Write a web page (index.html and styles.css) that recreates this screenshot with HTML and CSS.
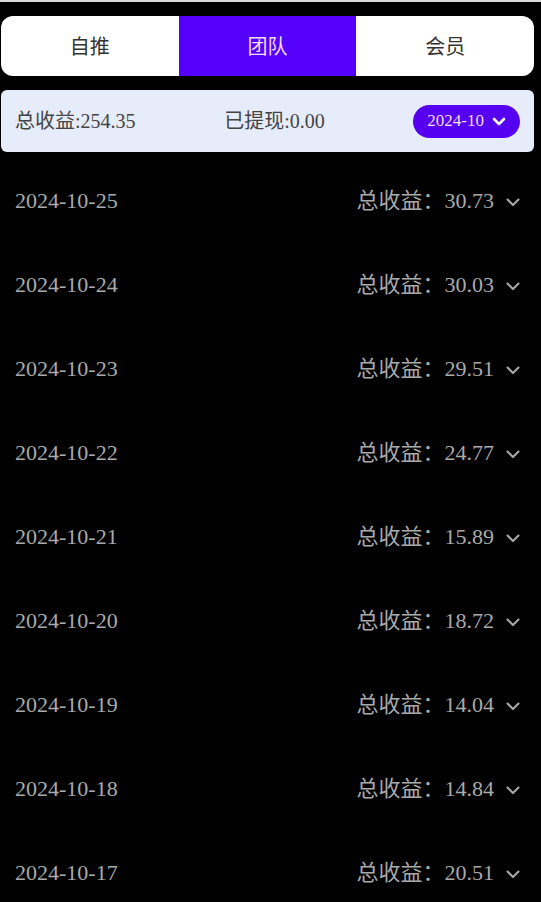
FILE: index.html
```html
<!DOCTYPE html>
<html lang="zh-CN">
<head>
<meta charset="utf-8">
<title>团队收益</title>
<link rel="stylesheet" href="styles.css">
</head>
<body>
<div class="topline"></div>
<div class="page">
  <div class="tabs">
    <div class="tab">自推</div>
    <div class="tab active">团队</div>
    <div class="tab">会员</div>
  </div>
  <div class="summary">
    <span class="sum-item">总收益:254.35</span>
    <span class="sum-item">已提现:0.00</span>
    <span class="pill">2024-10 <svg class="pill-chev" viewBox="0 0 14 9" width="14" height="9"><path d="M2 2 L7 7 L12 2" fill="none" stroke="#fff" stroke-width="2.6" stroke-linecap="round" stroke-linejoin="round"/></svg></span>
  </div>
  <div class="list">
    <div class="row"><span class="date">2024-10-25</span><span class="amount">总收益：30.73<svg class="chev" viewBox="0 0 14 9" width="14" height="9"><path d="M1.5 1.5 L7 7 L12.5 1.5" fill="none" stroke="#aaa" stroke-width="2" stroke-linecap="round" stroke-linejoin="round"/></svg></span></div>
    <div class="row"><span class="date">2024-10-24</span><span class="amount">总收益：30.03<svg class="chev" viewBox="0 0 14 9" width="14" height="9"><path d="M1.5 1.5 L7 7 L12.5 1.5" fill="none" stroke="#aaa" stroke-width="2" stroke-linecap="round" stroke-linejoin="round"/></svg></span></div>
    <div class="row"><span class="date">2024-10-23</span><span class="amount">总收益：29.51<svg class="chev" viewBox="0 0 14 9" width="14" height="9"><path d="M1.5 1.5 L7 7 L12.5 1.5" fill="none" stroke="#aaa" stroke-width="2" stroke-linecap="round" stroke-linejoin="round"/></svg></span></div>
    <div class="row"><span class="date">2024-10-22</span><span class="amount">总收益：24.77<svg class="chev" viewBox="0 0 14 9" width="14" height="9"><path d="M1.5 1.5 L7 7 L12.5 1.5" fill="none" stroke="#aaa" stroke-width="2" stroke-linecap="round" stroke-linejoin="round"/></svg></span></div>
    <div class="row"><span class="date">2024-10-21</span><span class="amount">总收益：15.89<svg class="chev" viewBox="0 0 14 9" width="14" height="9"><path d="M1.5 1.5 L7 7 L12.5 1.5" fill="none" stroke="#aaa" stroke-width="2" stroke-linecap="round" stroke-linejoin="round"/></svg></span></div>
    <div class="row"><span class="date">2024-10-20</span><span class="amount">总收益：18.72<svg class="chev" viewBox="0 0 14 9" width="14" height="9"><path d="M1.5 1.5 L7 7 L12.5 1.5" fill="none" stroke="#aaa" stroke-width="2" stroke-linecap="round" stroke-linejoin="round"/></svg></span></div>
    <div class="row"><span class="date">2024-10-19</span><span class="amount">总收益：14.04<svg class="chev" viewBox="0 0 14 9" width="14" height="9"><path d="M1.5 1.5 L7 7 L12.5 1.5" fill="none" stroke="#aaa" stroke-width="2" stroke-linecap="round" stroke-linejoin="round"/></svg></span></div>
    <div class="row"><span class="date">2024-10-18</span><span class="amount">总收益：14.84<svg class="chev" viewBox="0 0 14 9" width="14" height="9"><path d="M1.5 1.5 L7 7 L12.5 1.5" fill="none" stroke="#aaa" stroke-width="2" stroke-linecap="round" stroke-linejoin="round"/></svg></span></div>
    <div class="row"><span class="date">2024-10-17</span><span class="amount">总收益：20.51<svg class="chev" viewBox="0 0 14 9" width="14" height="9"><path d="M1.5 1.5 L7 7 L12.5 1.5" fill="none" stroke="#aaa" stroke-width="2" stroke-linecap="round" stroke-linejoin="round"/></svg></span></div>
  </div>
</div>
</body>
</html>
```
FILE: styles.css
```css
html, body {
  margin: 0;
  padding: 0;
  background: #000;
}
body {
  font-family: "Liberation Serif", "Noto Sans CJK SC", serif;
  overflow: hidden;
  height: 902px;
}
.topline {
  height: 2px;
  background: #d9d9d9;
}
.page {
  padding: 14px 7px 0 1px;
}
.tabs {
  display: flex;
  height: 60px;
  background: #fff;
  border-radius: 12px;
  overflow: hidden;
}
.tab {
  flex: 1;
  display: flex;
  align-items: center;
  justify-content: center;
  padding-top: 2px;
  font-size: 20px;
  line-height: 24px;
  color: #333;
}
.tab.active {
  background: #5500fb;
  color: #f6dcff;
}
.summary {
  margin-top: 14px;
  height: 62px;
  background: #e6ecf9;
  border-radius: 6px;
  display: flex;
  align-items: center;
  justify-content: space-between;
  padding: 0 14px;
}
.sum-item {
  font-size: 20px;
  line-height: 22px;
  color: #444;
}
.pill {
  display: flex;
  align-items: center;
  gap: 8px;
  height: 33px;
  padding: 0 14px;
  background: #5500f0;
  border-radius: 17px;
  font-size: 17px;
  line-height: 20px;
  color: #f6dcff;
}
.pill-chev {
  display: block;
}
.list {
  margin-top: 7px;
}
.row {
  height: 84px;
  display: flex;
  align-items: center;
  justify-content: space-between;
  padding: 0 14px;
  font-size: 22px;
  line-height: 24px;
  color: #aaa;
}
.date {
  line-height: 24px;
}
.amount {
  line-height: 24px;
  white-space: nowrap;
}
.chev {
  vertical-align: 1px;
  margin-left: 12px;
}
```
